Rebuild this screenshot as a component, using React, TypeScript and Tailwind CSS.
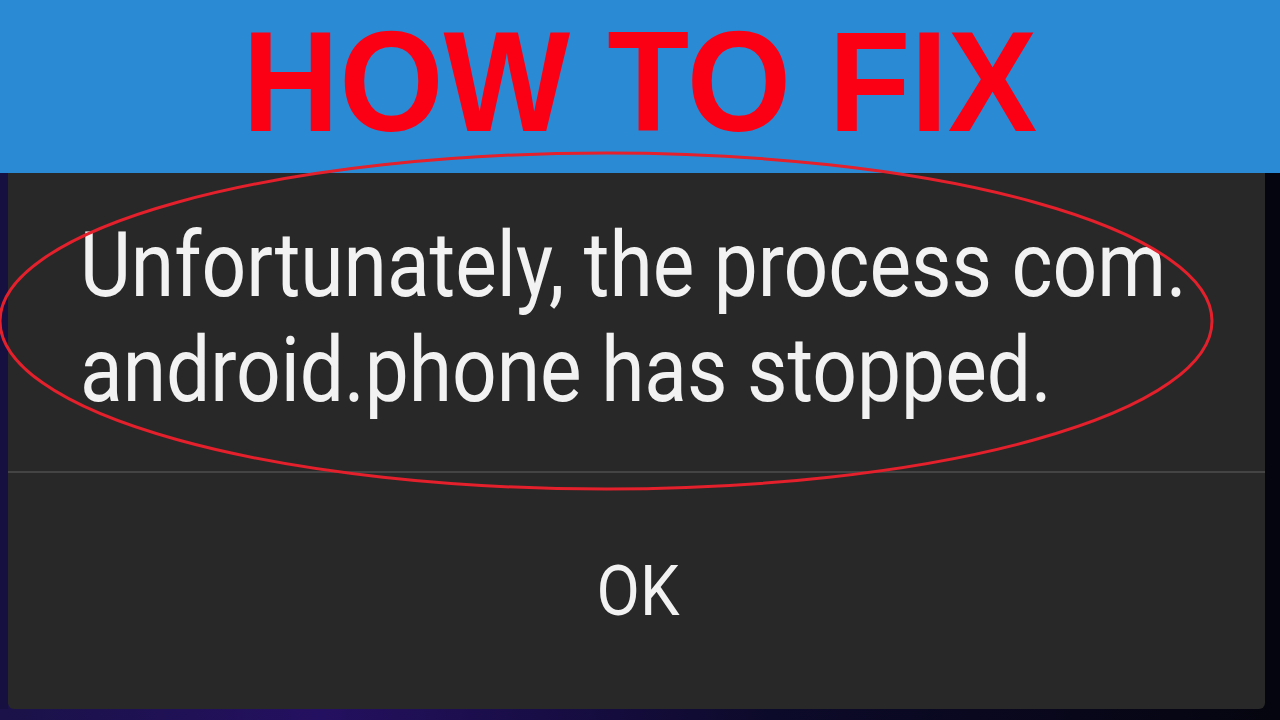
export default function App() {
  return (
    <div className="relative flex h-[720px] w-[1280px] flex-col overflow-hidden bg-[linear-gradient(90deg,#1a1248_0%,#241060_25%,#0c0a2a_60%,#05050f_100%)]">
      <header className="flex h-[173px] shrink-0 items-start justify-center bg-[#2a8bd4] pt-[10px]">
        <h1 className="inline-block scale-x-[0.938] whitespace-nowrap px-[4px] font-['Liberation_Sans',Arial,sans-serif] text-[143px] font-bold leading-none text-[#fb0014]">
          HOW TO FIX
        </h1>
      </header>

      <div className="flex h-[536px] shrink-0">
        <div className="w-[8px] shrink-0 bg-[#151040]" />
        <div className="flex min-w-0 flex-1 flex-col overflow-hidden rounded-b-[6px] bg-[#282828]">
          <div className="h-[300px] border-b-2 border-[#444444] pl-[72px] pt-[40px] font-['Roboto',sans-serif] text-[91px] leading-[105px] text-[#f2f2f2]">
            <p className="origin-left scale-x-[0.862] whitespace-nowrap">
              Unfortunately, the process com.
            </p>
            <p className="origin-left scale-x-[0.862] whitespace-nowrap">
              android.phone has stopped.
            </p>
          </div>
          <div className="flex flex-1 items-center justify-center pl-[4px] font-['Roboto',sans-serif] text-[70px] leading-none text-[#f2f2f2]">
            <span className="inline-block scale-x-[0.9]">OK</span>
          </div>
        </div>
        <div className="w-[15px] shrink-0 bg-[#05050f]" />
      </div>

      <svg
        className="pointer-events-none absolute left-0 top-0"
        width="1280"
        height="720"
        viewBox="0 0 1280 720"
      >
        <ellipse
          cx="606"
          cy="321"
          rx="606"
          ry="168"
          fill="none"
          stroke="#e3202b"
          strokeWidth="3"
        />
      </svg>
    </div>
  );
}
